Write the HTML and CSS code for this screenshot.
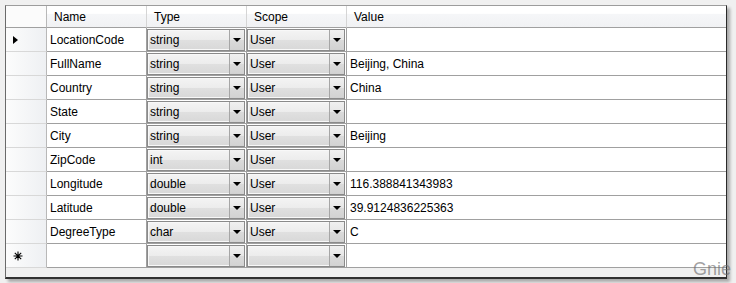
FILE: index.html
```html
<!DOCTYPE html>
<html>
<head>
  <title>Settings</title>
  <link rel="stylesheet" href="styles.css">
</head>
<body>
  <div class="page">
    <div class="frame">
      <table class="grid">
        <thead>
          <tr>
            <th class="corner"></th>
            <th class="col">Name</th>
            <th class="col">Type</th>
            <th class="col">Scope</th>
            <th class="col last">Value</th>
          </tr>
        </thead>
        <tbody>
          <tr>
            <td class="rowhead"><span class="current"></span></td>
            <td class="text">LocationCode</td>
            <td class="combo-cell"><div class="combo"><span>string</span><i class="drop"></i></div></td>
            <td class="combo-cell"><div class="combo"><span>User</span><i class="drop"></i></div></td>
            <td class="text last"></td>
          </tr>
          <tr>
            <td class="rowhead"></td>
            <td class="text">FullName</td>
            <td class="combo-cell"><div class="combo"><span>string</span><i class="drop"></i></div></td>
            <td class="combo-cell"><div class="combo"><span>User</span><i class="drop"></i></div></td>
            <td class="text last">Beijing, China</td>
          </tr>
          <tr>
            <td class="rowhead"></td>
            <td class="text">Country</td>
            <td class="combo-cell"><div class="combo"><span>string</span><i class="drop"></i></div></td>
            <td class="combo-cell"><div class="combo"><span>User</span><i class="drop"></i></div></td>
            <td class="text last">China</td>
          </tr>
          <tr>
            <td class="rowhead"></td>
            <td class="text">State</td>
            <td class="combo-cell"><div class="combo"><span>string</span><i class="drop"></i></div></td>
            <td class="combo-cell"><div class="combo"><span>User</span><i class="drop"></i></div></td>
            <td class="text last"></td>
          </tr>
          <tr>
            <td class="rowhead"></td>
            <td class="text">City</td>
            <td class="combo-cell"><div class="combo"><span>string</span><i class="drop"></i></div></td>
            <td class="combo-cell"><div class="combo"><span>User</span><i class="drop"></i></div></td>
            <td class="text last">Beijing</td>
          </tr>
          <tr>
            <td class="rowhead"></td>
            <td class="text">ZipCode</td>
            <td class="combo-cell"><div class="combo"><span>int</span><i class="drop"></i></div></td>
            <td class="combo-cell"><div class="combo"><span>User</span><i class="drop"></i></div></td>
            <td class="text last"></td>
          </tr>
          <tr>
            <td class="rowhead"></td>
            <td class="text">Longitude</td>
            <td class="combo-cell"><div class="combo"><span>double</span><i class="drop"></i></div></td>
            <td class="combo-cell"><div class="combo"><span>User</span><i class="drop"></i></div></td>
            <td class="text last">116.388841343983</td>
          </tr>
          <tr>
            <td class="rowhead"></td>
            <td class="text">Latitude</td>
            <td class="combo-cell"><div class="combo"><span>double</span><i class="drop"></i></div></td>
            <td class="combo-cell"><div class="combo"><span>User</span><i class="drop"></i></div></td>
            <td class="text last">39.9124836225363</td>
          </tr>
          <tr>
            <td class="rowhead"></td>
            <td class="text">DegreeType</td>
            <td class="combo-cell"><div class="combo"><span>char</span><i class="drop"></i></div></td>
            <td class="combo-cell"><div class="combo"><span>User</span><i class="drop"></i></div></td>
            <td class="text last">C</td>
          </tr>
          <tr>
            <td class="rowhead">
              <svg class="newrow" width="10" height="10" viewBox="0 0 10 10">
                <path d="M5 0.5V9.5M0.5 5H9.5M1.8 1.8L8.2 8.2M8.2 1.8L1.8 8.2" stroke="#000" stroke-width="1.1" fill="none"/>
              </svg>
            </td>
            <td class="text"></td>
            <td class="combo-cell"><div class="combo"><span></span><i class="drop"></i></div></td>
            <td class="combo-cell"><div class="combo"><span></span><i class="drop"></i></div></td>
            <td class="text last"></td>
          </tr>
        </tbody>
      </table>
    </div>
    <div class="watermark">Gnie</div>
  </div>
</body>
</html>
```

FILE: styles.css
```css
body {
  margin: 0;
  background-color: #f0f0f0;
  font-family: "Liberation Sans", Arial, sans-serif;
  font-size: 12px;
  color: #000;
}

.page {
  position: relative;
  width: 736px;
  height: 283px;
  padding: 5px 0 0 5px;
  box-sizing: border-box;
  overflow: hidden;
}

.frame {
  width: 722px;
  height: 274px;
  box-sizing: border-box;
  border: 1px solid #9c9c9c;
  border-left-color: #6a6a6a;
  border-right-color: #2a2a2a;
  border-bottom: 2px solid #303030;
  background-color: #f0f0f0;
  box-shadow: 3px 3px 3px rgba(0, 0, 0, 0.3);
  overflow: hidden;
}

.grid {
  width: 720px;
  table-layout: fixed;
  border-collapse: separate;
  border-spacing: 0;
}

.grid th, .grid td {
  box-sizing: border-box;
  padding: 0;
  white-space: nowrap;
  overflow: hidden;
}

.grid th {
  height: 22px;
  font-weight: normal;
  text-align: left;
  padding-left: 7px;
  background: linear-gradient(#ffffff 0%, #ffffff 35%, #f5f6f8 40%, #f1f2f4 100%);
  border-right: 1px solid #d5d5d5;
  border-bottom: 1px solid #a0a0a0;
}

.grid th.corner {
  width: 41px;
  padding: 0;
  background: #fbfbfb;
  border-right: 1px solid #b8b8b8;
}

.grid th.col {
  width: 100px;
}

.grid th.last {
  width: 379px;
  border-right: none;
}

.grid td {
  height: 24px;
  background-color: #fff;
  border-right: 1px solid #a0a0a0;
  border-bottom: 1px solid #a0a0a0;
}

.grid td.last {
  border-right: none;
}

.grid td.text {
  padding-left: 3px;
}

.grid td.rowhead {
  background: linear-gradient(to right, #fcfcfc, #eef0f3);
  border-right: 1px solid #b8b8b8;
  border-bottom: 1px solid #d8d8d8;
  padding-left: 7px;
}

.current {
  display: block;
  width: 0;
  height: 0;
  margin-left: 0;
  border-left: 5px solid #000;
  border-top: 4px solid transparent;
  border-bottom: 4px solid transparent;
}

.newrow {
  display: block;
  margin-left: 0;
}

.grid td.combo-cell {
  padding: 1px 1px 0 0;
  vertical-align: top;
}

.combo {
  display: flex;
  align-items: center;
  height: 22px;
  box-sizing: border-box;
  border: 1px solid #8a8a8a;
  box-shadow: inset 0 0 0 1px #f8f8f8;
  background: linear-gradient(#f4f4f4 0%, #ececec 50%, #e0e0e0 51%, #d8d8d8 100%);
}

.combo span {
  flex: 1;
  padding-left: 2px;
}

.drop {
  position: relative;
  width: 14px;
  height: 20px;
  border-left: 1px solid #a6a6a6;
  background: linear-gradient(#f0f0f0 0%, #e6e6e6 50%, #dadada 51%, #d2d2d2 100%);
}

.drop::after {
  content: "";
  position: absolute;
  left: 3px;
  top: 8px;
  border-top: 4px solid #000;
  border-left: 4px solid transparent;
  border-right: 4px solid transparent;
}

.watermark {
  position: absolute;
  left: 693px;
  top: 259px;
  font-size: 18px;
  color: rgba(110, 110, 110, 0.65);
}
```
